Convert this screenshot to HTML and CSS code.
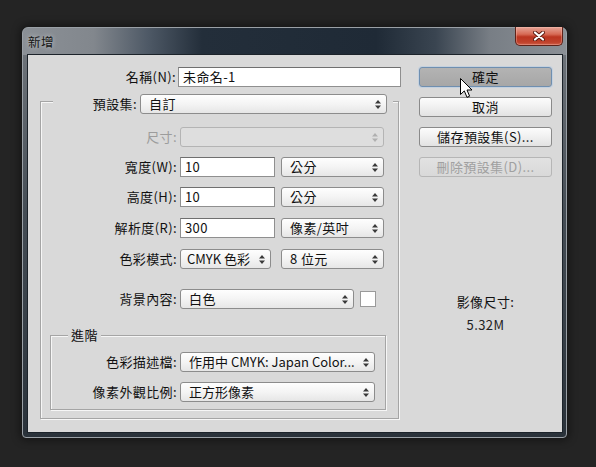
FILE: index.html
```html
<!DOCTYPE html>
<html lang="zh-Hant">
<head>
<meta charset="utf-8">
<title>新增</title>
<link rel="stylesheet" href="styles.css">
</head>
<body>
<div class="window">
  <div class="titlebar">
    <span class="title">新增</span>
    <div class="close">
      <svg width="12" height="10" viewBox="0 0 12 10"><path d="M2 1.5 L10 8.5 M10 1.5 L2 8.5" stroke="#5a1a10" stroke-width="4" stroke-linecap="round"/><path d="M2 1.5 L10 8.5 M10 1.5 L2 8.5" stroke="#fff" stroke-width="2.2" stroke-linecap="round"/></svg>
    </div>
  </div>
  <div class="content">
    <div class="left">
      <div class="name-row">
        <span class="lbl">名稱(N):</span>
        <div class="inp name-inp">未命名-1</div>
      </div>
      <div class="group preset">
        <div class="legend">
          <span class="lbl">預設集:</span>
          <div class="sel w-preset"><span>自訂</span><svg class="arr" viewBox="0 0 6 9"><path d="M3 0 L6 3.5 H0 Z M0 5.5 H6 L3 9 Z"/></svg></div>
        </div>
        <div class="row r-size">
          <span class="lbl dis">尺寸:</span>
          <div class="sel dis w-size"><span></span><svg class="arr" viewBox="0 0 6 9"><path d="M3 0 L6 3.5 H0 Z M0 5.5 H6 L3 9 Z"/></svg></div>
        </div>
        <div class="row">
          <span class="lbl">寬度(W):</span>
          <div class="inp w-num">10</div>
          <div class="sel w-unit"><span>公分</span><svg class="arr" viewBox="0 0 6 9"><path d="M3 0 L6 3.5 H0 Z M0 5.5 H6 L3 9 Z"/></svg></div>
        </div>
        <div class="row">
          <span class="lbl">高度(H):</span>
          <div class="inp w-num">10</div>
          <div class="sel w-unit"><span>公分</span><svg class="arr" viewBox="0 0 6 9"><path d="M3 0 L6 3.5 H0 Z M0 5.5 H6 L3 9 Z"/></svg></div>
        </div>
        <div class="row r-plus">
          <span class="lbl">解析度(R):</span>
          <div class="inp w-num">300</div>
          <div class="sel w-unit"><span>像素/英吋</span><svg class="arr" viewBox="0 0 6 9"><path d="M3 0 L6 3.5 H0 Z M0 5.5 H6 L3 9 Z"/></svg></div>
        </div>
        <div class="row r-plus">
          <span class="lbl">色彩模式:</span>
          <div class="sel w-mode"><span>CMYK 色彩</span><svg class="arr" viewBox="0 0 6 9"><path d="M3 0 L6 3.5 H0 Z M0 5.5 H6 L3 9 Z"/></svg></div>
          <div class="sel w-unit gap10"><span>8 位元</span><svg class="arr" viewBox="0 0 6 9"><path d="M3 0 L6 3.5 H0 Z M0 5.5 H6 L3 9 Z"/></svg></div>
        </div>
        <div class="row r-bg">
          <span class="lbl">背景內容:</span>
          <div class="sel w-bg"><span>白色</span><svg class="arr" viewBox="0 0 6 9"><path d="M3 0 L6 3.5 H0 Z M0 5.5 H6 L3 9 Z"/></svg></div>
          <div class="swatch"></div>
        </div>
        <div class="group adv">
          <div class="adv-legend">進階</div>
          <div class="row r-first">
            <span class="lbl">色彩描述檔:</span>
            <div class="sel w-adv"><span>作用中 CMYK: Japan Color...</span><svg class="arr" viewBox="0 0 6 9"><path d="M3 0 L6 3.5 H0 Z M0 5.5 H6 L3 9 Z"/></svg></div>
          </div>
          <div class="row">
            <span class="lbl">像素外觀比例:</span>
            <div class="sel w-adv"><span>正方形像素</span><svg class="arr" viewBox="0 0 6 9"><path d="M3 0 L6 3.5 H0 Z M0 5.5 H6 L3 9 Z"/></svg></div>
          </div>
        </div>
      </div>
    </div>
    <div class="right">
      <div class="btn hot">確定</div>
      <div class="btn">取消</div>
      <div class="btn">儲存預設集(S)...</div>
      <div class="btn disabled">刪除預設集(D)...</div>
      <div class="imgsize">
        <div>影像尺寸:</div>
        <div class="size-val">5.32M</div>
      </div>
    </div>
  </div>
  <svg class="cursor" width="13" height="21" viewBox="0 0 13 21"><path d="M0.5 0.5 V16.5 L4.3 12.9 L7 19.3 L9.6 18.2 L7 12 H12 Z" fill="#fff" stroke="#000" stroke-width="1" stroke-linejoin="round"/></svg>
</div>
</body>
</html>
```

FILE: styles.css
```css
* { box-sizing: border-box; }

html, body { height: 100%; }

body {
  margin: 0;
  padding: 27px 0 0 22px;
  background: #242424;
  font-family: "Noto Sans CJK TC", "Noto Sans", sans-serif;
  font-size: 13px;
  letter-spacing: 0.4px;
  color: #111;
  overflow: hidden;
}

.window {
  position: relative;
  width: 545px;
  height: 411px;
  border: 1px solid #9aa0a6;
  border-radius: 6px 6px 4px 4px;
  background:
    linear-gradient(to right, #8b9096 0%, #82878d 13%, #4e5966 23%, #232e3a 33%, #1f2a36 65%, #3a4551 76%, #787e85 86%, #8b9096 100%) 0 0 / 100% 27px no-repeat,
    linear-gradient(to bottom, #74797f 0%, #454d55 45%, #2a323a 100%);
  box-shadow: 0 0 8px 2px rgba(0, 0, 0, 0.45);
  display: flex;
  flex-direction: column;
}

.titlebar {
  height: 26px;
  display: flex;
  justify-content: space-between;
  align-items: flex-start;
  padding: 0 3px 0 5px;
}

.title {
  font-size: 12.5px;
  line-height: 27px;
  color: #161616;
  text-shadow: 0 0 5px rgba(255, 255, 255, 0.55);
}

.close {
  width: 48px;
  height: 19px;
  margin-top: -1px;
  border: 1px solid #5e2219;
  border-top: none;
  border-radius: 0 0 5px 5px;
  background: linear-gradient(to bottom, #e6a597 0%, #d76a55 40%, #bb3520 55%, #c0422c 85%, #d0604a 100%);
  box-shadow: inset 0 0 0 1px rgba(255, 200, 190, 0.35);
  display: flex;
  align-items: center;
  justify-content: center;
}

.content {
  margin: 0 3px 0 4px;
  height: 379px;
  border: 1px solid #1c232a;
  background: #d9d9d9;
  display: flex;
  padding-top: 12px;
}

.lbl {
  text-align: right;
  line-height: 18px;
  white-space: nowrap;
}

.lbl.dis { color: #9c9c9c; }

.name-row {
  display: flex;
  align-items: center;
}

.name-row .lbl { width: 150px; padding-right: 2px; }

.inp {
  height: 20px;
  border: 1px solid #8f8f8f;
  border-top-color: #6f6f6f;
  background: #fff;
  padding-left: 4px;
  line-height: 18px;
}

.name-inp { width: 223px; }

.group {
  border: 1px solid #a5a5a5;
  box-shadow: inset 1px 1px 0 #f6f6f6, 1px 1px 0 #f6f6f6;
}

.preset {
  margin: 14px 0 0 12px;
  width: 359px;
  padding-bottom: 8px;
}

.legend {
  display: flex;
  align-items: center;
  width: 340px;
  margin: -8px 0 0 12px;
  padding-right: 6px;
  background: #d9d9d9;
}

.legend .lbl {
  width: 84px;
  margin-right: 3px;
}

.sel {
  height: 20px;
  display: flex;
  align-items: center;
  justify-content: space-between;
  border: 1px solid #8c8c8c;
  border-radius: 3px;
  background: linear-gradient(to bottom, #fefefe 0%, #f4f4f4 50%, #e6e6e6 100%);
  padding: 0 5px 0 8px;
  line-height: 18px;
  white-space: nowrap;
}

.sel.dis {
  border-color: #b4b4b4;
  background: #dedede;
}

.arr {
  width: 6px;
  height: 9px;
  flex: none;
  fill: #3a3a3a;
}

.sel.dis .arr { fill: #b0b0b0; }

.w-preset { width: 247px; }
.w-size { width: 204px; }
.w-num { width: 95px; }
.w-unit { width: 103px; margin-left: 6px; }
.w-unit.gap10 { margin-left: 10px; }
.w-mode { width: 91px; padding-left: 6px; letter-spacing: 0; }
.w-bg { width: 174px; }
.w-adv { width: 195px; letter-spacing: 0; }

.row {
  display: flex;
  align-items: center;
  height: 20px;
  margin-top: 10px;
}

.row .lbl {
  width: 136px;
  margin-right: 3px;
}

.r-size { margin-top: 13px; }
.r-plus { margin-top: 11px; }
.r-bg { margin-top: 20px; }

.swatch {
  width: 16px;
  height: 16px;
  margin-left: 6px;
  background: #fff;
  border: 1px solid #9a9a9a;
}

.adv {
  margin: 26px 0 0 9px;
  width: 336px;
  padding-bottom: 7px;
}

.adv-legend {
  width: max-content;
  margin: -10px 0 0 17px;
  padding: 0 3px;
  height: 18px;
  line-height: 18px;
  background: #d9d9d9;
}

.adv .row .lbl { width: 126px; }
.adv .r-first { margin-top: 8px; }

.right {
  margin-left: 18px;
  width: 133px;
  display: flex;
  flex-direction: column;
  gap: 10px;
}

.btn {
  height: 20px;
  border: 1px solid #8a8a8a;
  border-radius: 3px;
  background: linear-gradient(to bottom, #fcfcfc 0%, #f0f0f0 50%, #e2e2e2 100%);
  text-align: center;
  line-height: 18px;
  white-space: nowrap;
}

.btn.hot {
  border-color: #6f8fb0;
  background: linear-gradient(to bottom, #b3b3b3 0%, #a7a7a7 100%);
  box-shadow: 0 0 0 1px rgba(170, 200, 230, 0.45);
}

.btn.disabled {
  border-color: #b6b6b6;
  background: linear-gradient(to bottom, #e2e2e2, #d9d9d9);
  color: #a0a0a0;
}

.imgsize {
  margin-top: 106px;
  text-align: center;
  line-height: 18px;
}

.size-val { margin-top: 5px; color: #222; }

.cursor {
  position: absolute;
  left: 437px;
  top: 50px;
}
```
